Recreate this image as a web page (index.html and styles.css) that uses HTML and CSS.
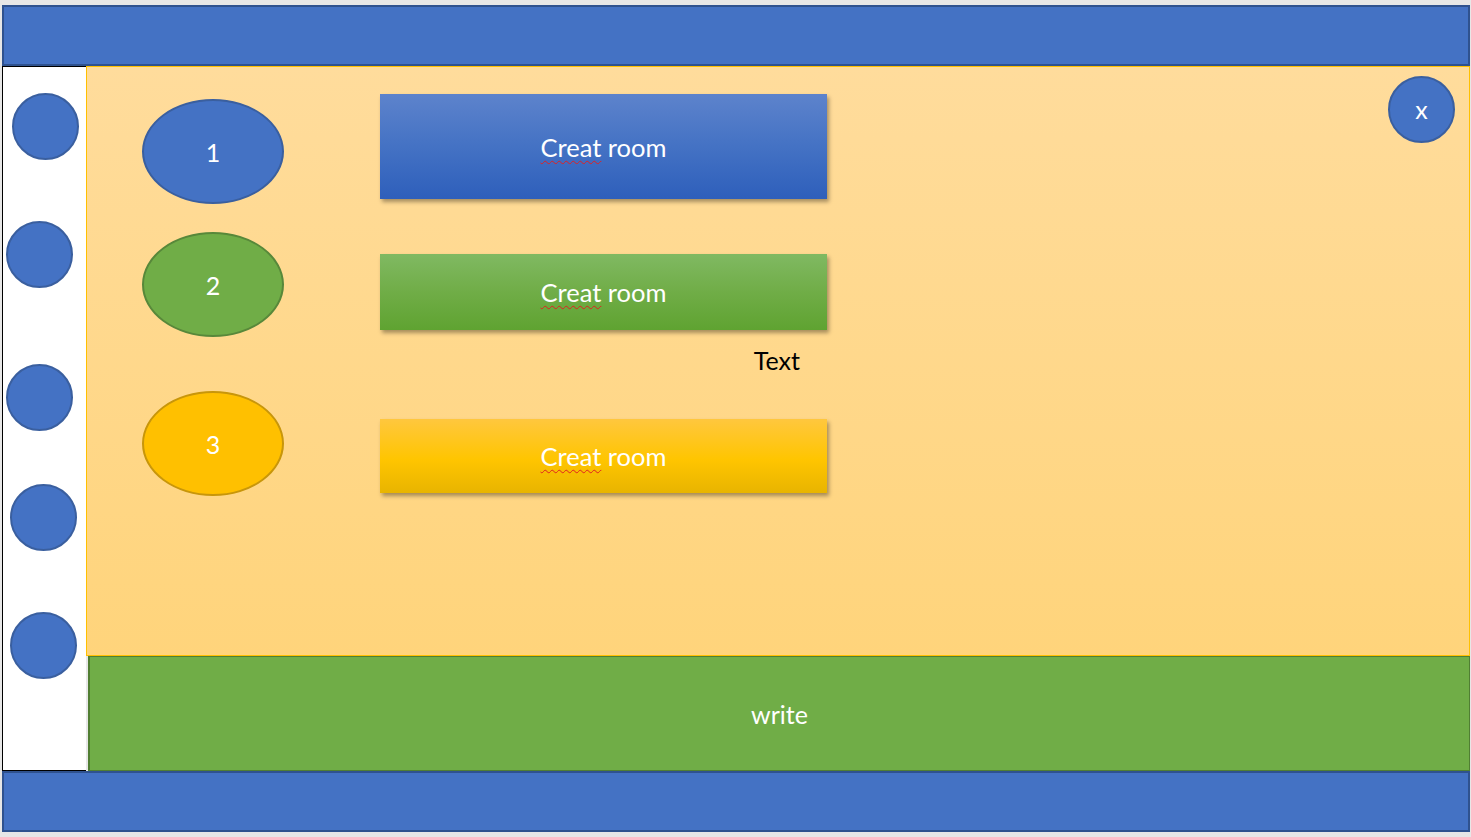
FILE: index.html
```html
<!DOCTYPE html>
<html>
<head>
<meta charset="utf-8">
<link rel="stylesheet" href="styles.css">
</head>
<body>
<div class="frame">
  <div class="bar"></div>
  <div class="middle">
    <div class="sidebar">
      <div class="dot dot-1"></div>
      <div class="dot dot-2"></div>
      <div class="dot dot-3"></div>
      <div class="dot dot-4"></div>
      <div class="dot dot-5"></div>
    </div>
    <div class="content">
      <div class="panel">
        <div class="ovals">
          <div class="oval oval-blue">1</div>
          <div class="oval oval-green oval-2">2</div>
          <div class="oval oval-yellow oval-3">3</div>
        </div>
        <div class="buttons">
          <div class="btn btn-blue"><span class="typo">Creat</span>&nbsp;room</div>
          <div class="btn btn-green"><span class="typo">Creat</span>&nbsp;room</div>
          <div class="note">Text</div>
          <div class="btn btn-yellow"><span class="typo">Creat</span>&nbsp;room</div>
        </div>
        <div class="close">x</div>
      </div>
      <div class="writebar">write</div>
    </div>
  </div>
  <div class="bar"></div>
</div>
</body>
</html>
```
FILE: styles.css
```css
html, body {
  margin: 0;
  padding: 0;
}
body {
  background: #e7e7e7;
  width: 1471px;
  height: 837px;
  overflow: hidden;
  font-family: Lato, "Open Sans", "Noto Sans", sans-serif;
}
.frame {
  padding: 5px 1px 0 2px;
}
.bar {
  height: 61px;
  background: #4472c4;
  border: 2px solid #2f528f;
  box-sizing: border-box;
}
.middle {
  display: flex;
  height: 705px;
}
.sidebar {
  width: 84px;
  flex: none;
  background: #fff;
  border-left: 1px solid #000;
  border-top: 1px solid #000;
  border-bottom: 1px solid #000;
  box-sizing: border-box;
}
.dot {
  width: 67px;
  height: 67px;
  border-radius: 50%;
  background: #4472c4;
  border: 2px solid #3a5f9f;
  box-sizing: border-box;
}
.dot-1 { margin: 26px 0 0 9px; }
.dot-2 { margin: 61px 0 0 3px; }
.dot-3 { margin: 76px 0 0 3px; }
.dot-4 { margin: 53px 0 0 7px; }
.dot-5 { margin: 61px 0 0 7px; }
.content {
  flex: 1;
  display: flex;
  flex-direction: column;
}
.panel {
  height: 590px;
  box-sizing: border-box;
  border: 1px solid #ffc000;
  background: linear-gradient(#ffdc9c, #ffd47b);
  display: flex;
  align-items: flex-start;
}
.ovals {
  margin-left: 55px;
  padding-top: 32px;
}
.oval {
  width: 142px;
  height: 105px;
  border-radius: 50%;
  box-sizing: border-box;
  display: flex;
  align-items: center;
  justify-content: center;
  color: #fff;
  font-size: 25px;
}
.oval-blue { background: #4472c4; border: 2px solid #3a5f9f; }
.oval-green { background: #70ad47; border: 2px solid #58883a; }
.oval-yellow { background: #ffc000; border: 2px solid #c8960a; }
.oval-2 { margin-top: 28px; }
.oval-3 { margin-top: 54px; }
.buttons {
  margin-left: 96px;
  padding-top: 27px;
  width: 447px;
}
.btn {
  display: flex;
  align-items: center;
  justify-content: center;
  color: #fff;
  font-size: 25.5px;
  box-shadow: 2px 3px 4px rgba(0, 0, 0, 0.35);
}
.btn-blue {
  height: 105px;
  background: linear-gradient(#5d83cc, #4472c4 50%, #2e5fbb);
}
.btn-green {
  height: 76px;
  margin-top: 55px;
  background: linear-gradient(#80b962, #70ad47 50%, #5fa331);
}
.btn-yellow {
  height: 74px;
  margin-top: 46px;
  background: linear-gradient(#ffc73e, #ffc500 55%, #e8b400);
}
.typo {
  text-decoration: underline wavy #e02020;
  text-decoration-thickness: 1px;
  text-underline-offset: 3px;
}
.note {
  margin-top: 17px;
  height: 26px;
  line-height: 26px;
  font-size: 25px;
  color: #000;
  text-align: right;
  padding-right: 27px;
}
.close {
  margin: 9px 14px 0 auto;
  width: 67px;
  height: 67px;
  border-radius: 50%;
  background: #4472c4;
  border: 2px solid #3a5f9f;
  box-sizing: border-box;
  color: #fff;
  font-size: 25px;
  display: flex;
  align-items: center;
  justify-content: center;
  padding-bottom: 2px;
}
.writebar {
  flex: 1;
  margin-left: 2px;
  background: #70ad47;
  border: 1px solid #507e32;
  border-left-width: 2px;
  box-sizing: border-box;
  display: flex;
  align-items: center;
  justify-content: center;
  color: #fff;
  font-size: 25px;
}
```
